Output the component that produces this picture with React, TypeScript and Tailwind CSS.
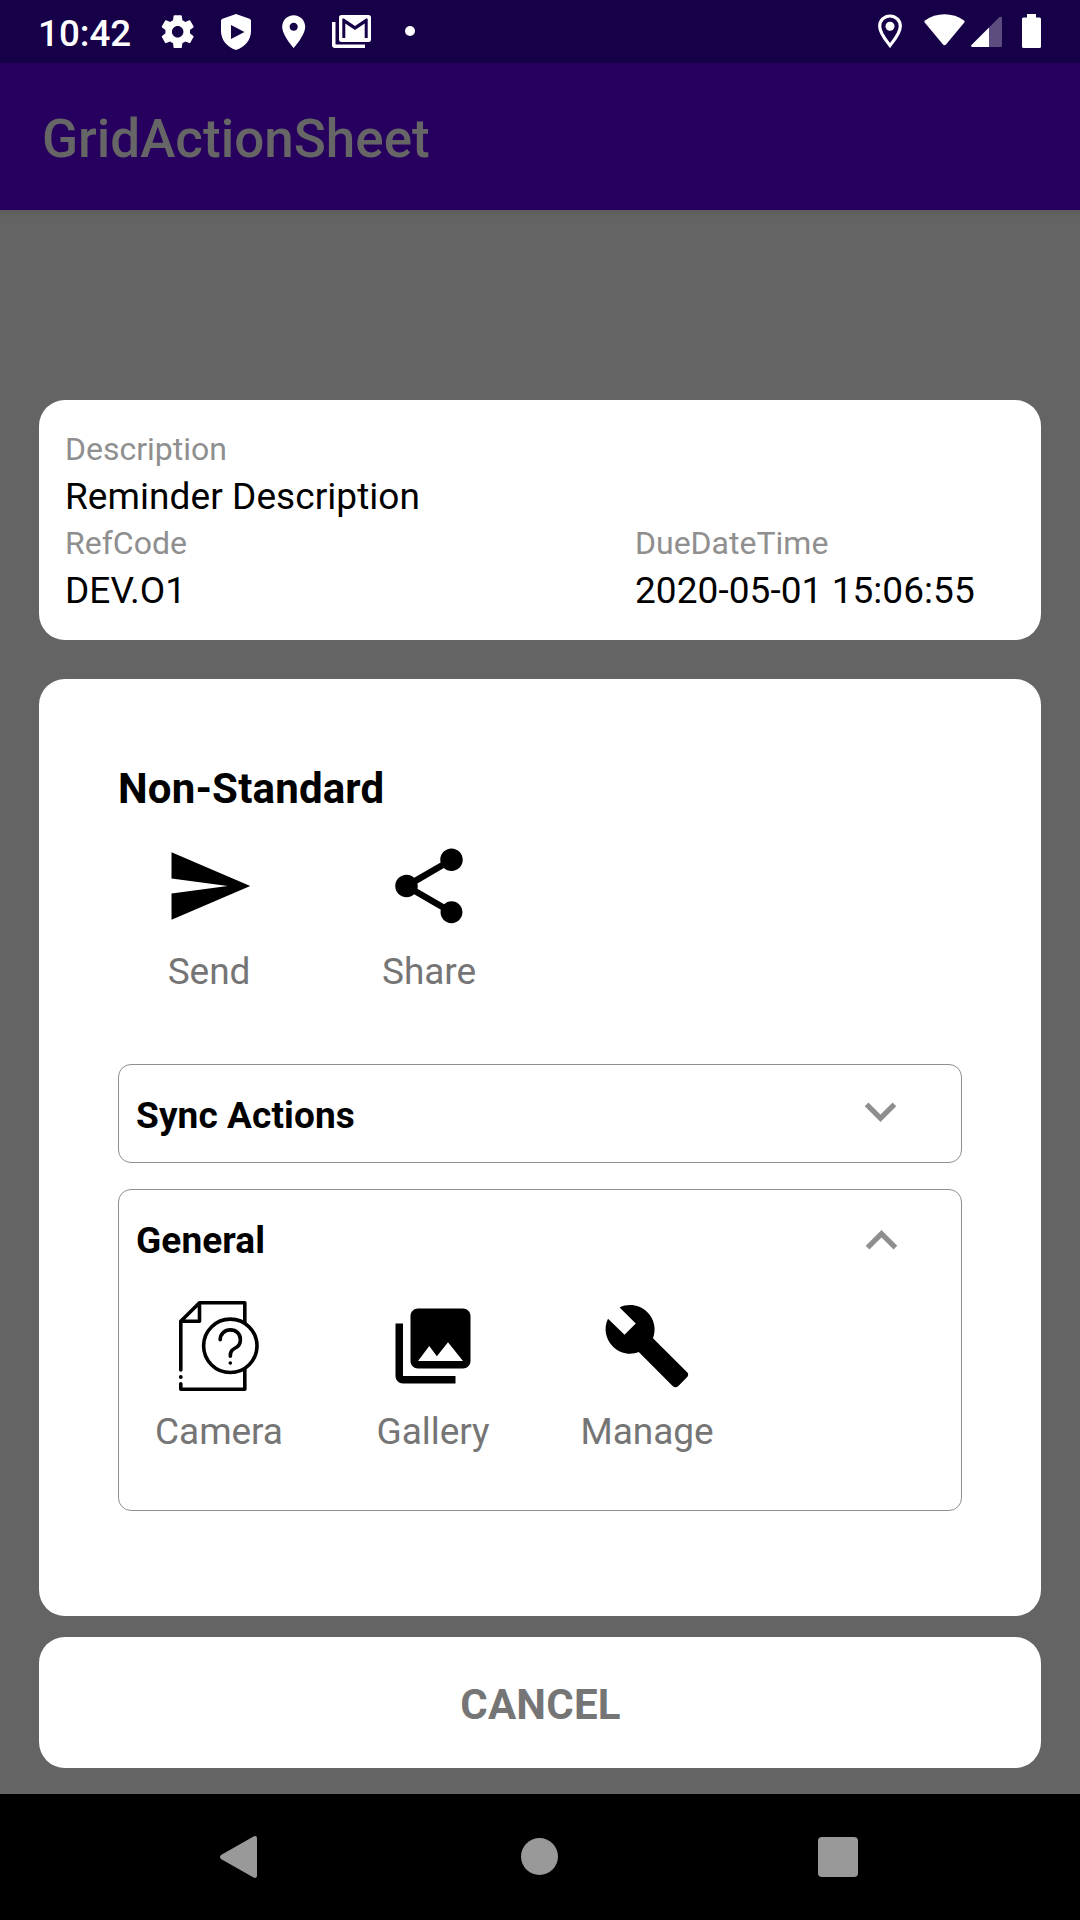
import React from "react";

const send = <path d="M2.01 21L23 12 2.01 3 2 10l15 2-15 2z" />;
const share = (
  <path d="M18 16.08c-.76 0-1.44.3-1.96.77L8.91 12.7c.05-.23.09-.46.09-.7s-.04-.47-.09-.7l7.05-4.11c.54.5 1.25.81 2.04.81 1.66 0 3-1.34 3-3s-1.34-3-3-3-3 1.34-3 3c0 .24.04.47.09.7L8.04 9.81C7.5 9.31 6.79 9 6 9c-1.66 0-3 1.34-3 3s1.34 3 3 3c.79 0 1.5-.31 2.04-.81l7.12 4.16c-.05.21-.08.43-.08.65 0 1.61 1.31 2.92 2.92 2.92 1.61 0 2.92-1.31 2.92-2.92s-1.31-2.92-2.92-2.92z" />
);
const gallery = (
  <path d="M22 16V4c0-1.1-.9-2-2-2H8c-1.1 0-2 .9-2 2v12c0 1.1.9 2 2 2h12c1.1 0 2-.9 2-2zm-11-4l2.03 2.71L16 11l4 5H8l3-4zM2 6v14c0 1.1.9 2 2 2h14v-2H4V6H2z" />
);
const wrench = (
  <path d="M22.7 19l-9.1-9.1c.9-2.3.4-5-1.5-6.9-2-2-5-2.4-7.4-1.3L9 6 6 9 1.6 4.7C.4 7.1.9 10.1 2.9 12.1c1.9 1.9 4.6 2.4 6.9 1.5l9.1 9.1c.4.4 1 .4 1.4 0l2.3-2.3c.5-.4.5-1.1.1-1.4z" />
);

function Glyph({ children }: { children: React.ReactNode }) {
  return (
    <svg viewBox="0 0 24 24" className="size-[90px] fill-black">
      {children}
    </svg>
  );
}

function DocumentQuestion() {
  return (
    <svg viewBox="0 0 90 90" className="size-[90px] fill-none stroke-black" strokeWidth="3.6" strokeLinecap="round" strokeLinejoin="round">
      <path d="M6.8 69V20.3L25.5 1.8H70.8V21.5M70.8 68V88.2H6.8V82.8M6.8 20.3H25.5V1.8" />
      <circle cx="56.3" cy="44.8" r="26.7" />
      <path d="M46.2 38.8C46.2 32.8 50.8 28.9 56.4 28.9C62.2 28.9 66.4 33 66.4 38.4C66.4 42.4 64.4 45.4 61.3 47C58 48.7 56.3 50.2 56.3 55.3" />
      <circle cx="56.3" cy="62" r="1.8" className="fill-black stroke-none" />
      <circle cx="6.8" cy="76" r="1.9" className="fill-black stroke-none" />
    </svg>
  );
}

function Action({ label, width, children }: { label: string; width: string; children: React.ReactNode }) {
  return (
    <div className={`flex flex-col items-center ${width}`}>
      {children}
      <span className="mt-[19px] text-[37px] leading-[43px] tracking-[-0.05px] text-[#757575]">{label}</span>
    </div>
  );
}

function Field({ label, value }: { label: string; value: string }) {
  return (
    <div className="whitespace-nowrap">
      <div className="mb-0.5 text-[32px] leading-[42px] text-[#8f8f8f]">{label}</div>
      <div className="text-[37px] leading-[50px] tracking-[0.06px] text-black">{value}</div>
    </div>
  );
}

function StatusBar() {
  return (
    <div className="flex h-[63px] items-start bg-[#160047] text-white">
      <span className="ml-[38px] mt-3 w-[120px] text-[36.75px] font-medium leading-[43px]">10:42</span>
      <svg viewBox="0 0 24 24" className="mt-3 size-[39.4px] fill-white">
        <path d="M19.43 12.98c.04-.32.07-.64.07-.98s-.03-.66-.07-.98l2.11-1.65c.19-.15.24-.42.12-.64l-2-3.46c-.12-.22-.39-.3-.61-.22l-2.49 1c-.52-.4-1.08-.73-1.69-.98l-.38-2.65C14.46 2.18 14.25 2 14 2h-4c-.25 0-.46.18-.49.42l-.38 2.65c-.61.25-1.17.59-1.69.98l-2.49-1c-.23-.09-.49 0-.61.22l-2 3.46c-.13.22-.07.49.12.64l2.11 1.65c-.04.32-.07.65-.07.98s.03.66.07.98l-2.11 1.65c-.19.15-.24.42-.12.64l2 3.46c.12.22.39.3.61.22l2.49-1c.52.4 1.08.73 1.69.98l.38 2.65c.03.24.24.42.49.42h4c.25 0 .46-.18.49-.42l.38-2.65c.61-.25 1.17-.59 1.69-.98l2.49 1c.23.09.49 0 .61-.22l2-3.46c.12-.22.07-.49-.12-.64l-2.11-1.65zM12 15.5c-1.93 0-3.5-1.57-3.5-3.5s1.57-3.5 3.5-3.5 3.5 1.57 3.5 3.5-1.57 3.5-3.5 3.5z" />
      </svg>
      <svg viewBox="0 0 30 36" className="ml-[23.6px] mt-[14px] h-[36px] w-[30px] fill-white">
        <path fillRule="evenodd" d="M15 0L28.5 4.7Q30 5.3 30 7V17C30 26 24 33 15 36C6 33 0 26 0 17V7Q0 5.3 1.5 4.7ZM10 11V25L23.5 18Z" />
      </svg>
      <svg viewBox="0 0 24 24" className="ml-[23px] mt-3 size-[39.4px] fill-white">
        <path d="M12 2C8.13 2 5 5.13 5 9c0 5.25 7 13 7 13s7-7.75 7-13c0-3.87-3.13-7-7-7zm0 9.5c-1.38 0-2.5-1.12-2.5-2.5s1.12-2.5 2.5-2.5 2.5 1.12 2.5 2.5-1.12 2.5-2.5 2.5z" />
      </svg>
      <svg viewBox="0 0 39 33" className="ml-[18.6px] mt-[15px] h-[33px] w-[39px]">
        <path d="M0 7H3.5V29.5H33V33H3Q0 33 0 30Z" className="fill-white" />
        <path fillRule="evenodd" d="M9.5 0H36.5Q39 0 39 2.500V24.500Q39 27 36.500 27H9.500Q7 27 7 24.500V2.500Q7 0 9.500 0ZM10.300 4V23H13.300V8.500L23 15L32.700 8.500V23H35.700V4L34.500 3.300L23 11L11.500 3.300Z" className="fill-white" />
      </svg>
      <span className="ml-[34px] mt-[26px] size-[10px] rounded-full bg-white" />
      <svg viewBox="0 0 24 34" className="ml-[463px] mt-[14px] h-[34px] w-[24px]">
        <path d="M12 2C6.3 2 1.7 6.500 1.700 12.200C1.700 19.200 7.500 25.500 12 31.500C16.500 25.500 22.300 19.200 22.300 12.200C22.300 6.500 17.700 2 12 2Z" className="fill-none stroke-white" strokeWidth="3.2" />
        <circle cx="12" cy="12.300" r="4.500" className="fill-white" />
      </svg>
      <svg viewBox="0 0 41 32" className="ml-[22px] mt-[14px] h-[32px] w-[41px] fill-white">
        <path d="M1 6.500C12 -1.800 29 -1.800 40 6.500Q41 7.500 40.300 8.500L22 30.500Q20.500 32 19 30.500L.7 8.500Q0 7.500 1 6.500Z" />
      </svg>
      <svg viewBox="0 0 31 31" className="ml-[6px] mt-4 size-[31px] fill-white">
        <path d="M18 11.500V31H1Q-.5 30.500.5 29Z" />
        <path d="M18 11.500L28.500 1Q30.500 0 31 2V29.500Q31 31 29.500 31H18Z" fillOpacity=".3" />
      </svg>
      <svg viewBox="0 0 19 34" className="ml-5 mt-[14px] h-[34px] w-[19px] fill-white">
        <path d="M5 0H14V3.500H17.500Q19 3.500 19 5V32.500Q19 34 17.500 34H1.500Q0 34 0 32.500V5Q0 3.500 1.500 3.500H5Z" />
      </svg>
    </div>
  );
}

function Chevron({ d, className }: { d: string; className: string }) {
  return (
    <svg viewBox="0 0 24 24" className={`size-[63px] fill-[#8f8f8f] ${className}`}>
      <path d={d} />
    </svg>
  );
}

export default function App() {
  return (
    <div className="flex h-[1920px] w-[1080px] flex-col overflow-hidden bg-[#646464] font-['Roboto',sans-serif]">
      <StatusBar />
      <header className="h-[147px] bg-[#27005f] pl-[42px] pt-[45px]">
        <h1 className="text-[53px] font-medium leading-[62px] text-[#666666]">GridActionSheet</h1>
      </header>
      <div className="h-2 shrink-0 bg-linear-to-b from-[#5b5b5b] to-[#646464]" />

      <main className="flex grow flex-col px-[39px] pt-[182px]">
        <section className="grid h-[240px] grid-cols-[570px_1fr] content-start rounded-[26px] bg-white pl-[26px] pt-7">
          <div className="col-span-2 h-[94px]">
            <Field label="Description" value="Reminder Description" />
          </div>
          <Field label="RefCode" value="DEV.O1" />
          <Field label="DueDateTime" value="2020-05-01 15:06:55" />
        </section>

        <section className="mt-[39px] h-[937px] rounded-[26px] bg-white px-[79px] pt-[85px]">
          <h2 className="text-[42px] font-bold leading-[49px] tracking-[0.17px]">Non-Standard</h2>
          <div className="mt-7 flex gap-[38px]">
            <Action label="Send" width="w-[182px]"><Glyph>{send}</Glyph></Action>
            <Action label="Share" width="w-[182px]"><Glyph>{share}</Glyph></Action>
          </div>

          <div className="mt-[71px] flex h-[99px] justify-between rounded-[13px] border border-[#8f8f8f] pl-[17px] pr-[49px]">
            <h3 className="mt-[29px] text-[37px] font-bold leading-[43px] tracking-[0.1px]">Sync Actions</h3>
            <Chevron className="mt-[15px]" d="M16.59 8.59L12 13.17 7.41 8.59 6 10l6 6 6-6z" />
          </div>

          <div className="mt-[26px] h-[322px] rounded-[13px] border border-[#8f8f8f]">
            <div className="flex h-[111px] justify-between pl-[17px] pr-12">
              <h3 className="mt-[29px] text-[37px] font-bold leading-[43px] tracking-[0.1px]">General</h3>
              <Chevron className="mt-[19px]" d="M12 8l-6 6 1.41 1.41L12 10.83l4.59 4.58L18 14z" />
            </div>
            <div className="flex gap-3.5">
              <Action label="Camera" width="w-[200px]"><DocumentQuestion /></Action>
              <Action label="Gallery" width="w-[200px]"><Glyph>{gallery}</Glyph></Action>
              <Action label="Manage" width="w-[200px]"><Glyph>{wrench}</Glyph></Action>
            </div>
          </div>
        </section>

        <button className="mt-[21px] h-[131px] rounded-[26px] bg-white pl-px pt-1 text-[42px] font-bold leading-[49px] tracking-[0.25px] text-[#757575]">
          CANCEL
        </button>
      </main>

      <nav className="flex h-[126px] shrink-0 items-start bg-black">
        <svg viewBox="0 0 37 42" className="ml-[220px] mt-[42px] h-[42px] w-[37px] fill-[#999999]">
          <path d="M1 19L33.500.5Q37-1 37 2.500V39.500Q37 43 33.500 41.500L1 23Q-1 21 1 19Z" />
        </svg>
        <span className="ml-[264px] mt-11 size-[37px] rounded-full bg-[#999999]" />
        <span className="ml-[260px] mt-[43px] size-10 rounded-[4px] bg-[#999999]" />
      </nav>
    </div>
  );
}
